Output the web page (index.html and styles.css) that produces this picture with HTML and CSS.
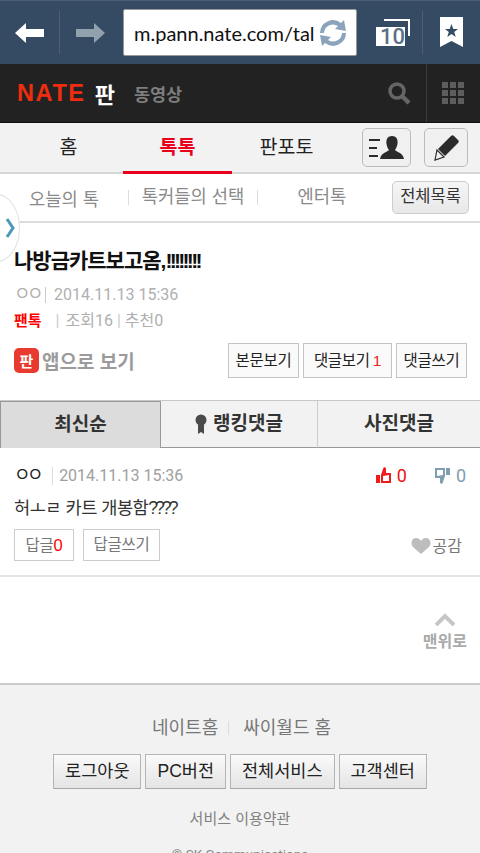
FILE: index.html
```html
<!DOCTYPE html>
<html lang="ko">
<head>
  <meta charset="UTF-8" />
  <meta name="viewport" content="width=device-width, initial-scale=1.0" />
  <title>나방금카트보고옴</title>
  <link rel="stylesheet" href="styles.css">
</head>
<body>
  <div class="browser-bar">
    <div class="nav-btn">
      <svg width="30" height="20" viewBox="0 0 30 20"><path d="M0 10 11 0V6H29V14H11V20Z" fill="#fff"/></svg>
    </div>
    <div class="nav-btn forward">
      <svg width="30" height="20" viewBox="0 0 30 20"><path d="M29 10 18 0V6H0V14H18V20Z" fill="#93a1af"/></svg>
    </div>
    <div class="url-box">
      <span class="url-text">m.pann.nate.com/tal</span>
      <svg class="reload" width="28" height="30" viewBox="0 0 28 30">
        <path d="M1 15A13 13 0 0 1 22 5L25 2 27 13 16 11 19 8A9 9 0 0 0 5 15Z" fill="#8ba4bb"/>
        <path d="M27 15A13 13 0 0 1 6 25L3 28 1 17 12 19 9 22A9 9 0 0 0 23 15Z" fill="#8ba4bb"/>
      </svg>
    </div>
    <div class="tabs-btn">
      <svg width="36" height="28" viewBox="0 0 36 28">
        <path d="M8 0H34V17H32V2H8Z" fill="#fff"/>
        <rect x="0" y="8" width="29" height="19" fill="#fff"/>
      </svg>
      <span class="tabs-count">10</span>
    </div>
    <div class="bookmark-btn">
      <svg width="23" height="31" viewBox="0 0 23 31">
        <path d="M0 0H23V30L11.500 24 0 30Z" fill="#fff"/>
        <path d="M11.500 7 13.300 12H18L14.200 15 15.700 20 11.500 17 7.300 20 8.800 15 5 12H9.700Z" fill="#344b63"/>
      </svg>
    </div>
  </div>

  <header class="site-head">
    <a class="logo">NATE</a>
    <a class="logo-pann">판</a>
    <a class="head-link">동영상</a>
    <div class="head-search">
      <svg width="24" height="24" viewBox="0 0 24 24" fill="none" stroke="#666">
        <circle cx="10" cy="10" r="7" stroke-width="3.500"/>
        <path d="M15 15 22 22" stroke-width="4.500"/>
      </svg>
    </div>
    <div class="head-menu">
      <span></span><span></span><span></span><span></span><span></span><span></span><span></span><span></span><span></span>
    </div>
  </header>

  <nav class="main-tabs">
    <a class="main-tab">홈</a>
    <a class="main-tab active">톡톡</a>
    <a class="main-tab">판포토</a>
    <div class="tab-tools">
      <div class="tool-btn wide">
        <svg width="36" height="26" viewBox="0 0 36 26" fill="#2b2b2b">
          <rect x="0" y="4" width="11" height="2"/><rect x="0" y="12" width="8" height="2"/><rect x="0" y="20" width="9" height="2"/>
          <path d="M23 1C28 1 29 5 28.500 9 28 12 26.500 14 26 15 28 17 34 18 35 24H11C12 18 18 17 20 15 19 14 18 12 17.500 9 17 5 18 1 23 1Z"/>
        </svg>
      </div>
      <div class="tool-btn">
        <svg width="26" height="26" viewBox="0 0 26 26">
          <path d="M18 1C19 0 20 0 21 1L25 5C26 6 26 7 25 8L12 21 5 14Z" fill="#2b2b2b"/>
          <path d="M4 15 11 22 2 25Z" fill="#f2f2f2" stroke="#2b2b2b" stroke-width="1.200"/>
        </svg>
      </div>
    </div>
  </nav>

  <nav class="sub-tabs">
    <a class="sub-tab">오늘의 톡</a>
    <a class="sub-tab sep">톡커들의 선택</a>
    <a class="sub-tab sep">엔터톡</a>
    <a class="all-list">전체목록</a>
  </nav>

  <div class="side-handle">
    <svg width="10" height="22" viewBox="0 0 10 22" fill="none" stroke="#4a9ab8" stroke-width="3"><path d="M2 2 8 11 2 20"/></svg>
  </div>

  <section class="post">
    <h1 class="post-title">나방금카트보고옴,<span class="bangs">!!!!!!!!</span></h1>
    <p class="post-meta"><span class="bar-after"><span class="jamo">ㅇㅇ</span></span> 2014.11.13 15:36</p>
    <p class="post-meta second"><span class="red-cat">팬톡</span><span class="pipe">|</span>조회16 <span class="pipe-small">|</span> 추천0</p>
    <div class="post-actions">
      <div class="app-icon"><span>판</span></div>
      <span class="app-text">앱으로 보기</span>
      <div class="action-btns">
        <a class="box-btn">본문보기</a>
        <a class="box-btn">댓글보기<em>1</em></a>
        <a class="box-btn">댓글쓰기</a>
      </div>
    </div>
  </section>

  <div class="reply-tabs">
    <a class="reply-tab active">최신순</a>
    <a class="reply-tab">
      <svg width="12" height="20" viewBox="0 0 12 20" fill="#4a4a4a"><circle cx="6" cy="6" r="5.500"/><path d="M3 11H9V20L6 18 3 20Z"/></svg>
      랭킹댓글
    </a>
    <a class="reply-tab">사진댓글</a>
  </div>

  <section class="comment">
    <div class="comment-top">
      <span class="comment-author"><span class="jamo">ㅇㅇ</span></span>
      <span class="comment-date">2014.11.13 15:36</span>
      <span class="vote up">
        <svg width="15" height="17" viewBox="0 0 15 17" fill="#ee1c1c"><path d="M0 8H4V16H0ZM5 8 7 2 8 0 10 1V6H15V16H5ZM7 9V14H13V8Z"/></svg>
        0
      </span>
      <span class="vote down">
        <svg width="15" height="17" viewBox="0 0 15 17" fill="#7f9eb0"><path d="M15 8H11V1H15ZM10 9 8 15 7 17 5 16V11H0V1H10ZM8 8V3H2V9Z"/></svg>
        0
      </span>
    </div>
    <p class="comment-body">허ㅗㄹ 카트 개봉함<span class="quest">????</span></p>
    <div class="comment-actions">
      <a class="box-btn light">답글<em>0</em></a>
      <a class="box-btn light">답글쓰기</a>
      <span class="like">
        <svg width="20" height="17" viewBox="0 0 20 17"><path d="M10 17 2 10C-1 6 1 1 5 1 7 1 9 2 10 4 11 2 13 1 15 1 19 1 21 6 18 10Z" fill="#bdbdbd"/></svg>
        공감
      </span>
    </div>
  </section>

  <div class="to-top-row">
    <a class="to-top">
      <svg width="20" height="13" viewBox="0 0 20 13" fill="none" stroke="#c6c6c6" stroke-width="4"><path d="M1 12 10 3 19 12"/></svg>
      맨위로
    </a>
  </div>

  <footer class="site-foot">
    <div class="foot-links"><a>네이트홈</a><span class="foot-sep"></span><a>싸이월드 홈</a></div>
    <div class="foot-btns">
      <a class="foot-btn">로그아웃</a>
      <a class="foot-btn">PC버전</a>
      <a class="foot-btn">전체서비스</a>
      <a class="foot-btn">고객센터</a>
    </div>
    <p class="foot-terms">서비스 이용약관</p>
    <p class="foot-copy">© SK Communications</p>
  </footer>
</body>
</html>
```

FILE: styles.css
```css
html, body {
  margin: 0;
  height: 853px;
  overflow: hidden;
}
body {
  position: relative;
  font-family: "Liberation Sans", "Noto Sans CJK KR", sans-serif;
  background: #fff;
  color: #222;
}
p, h1 {
  margin: 0;
}
em {
  font-style: normal;
  color: #e8261c;
}
.jamo {
  font-size: 18px;
  letter-spacing: -3.500px;
  font-weight: normal;
}

/* browser toolbar */
.browser-bar {
  height: 64px;
  box-sizing: border-box;
  background: #344b63;
  border-top: 1px solid #4b6078;
  display: flex;
  align-items: center;
}
.nav-btn {
  width: 59px;
  height: 43px;
  display: flex;
  align-items: center;
  justify-content: center;
  border-right: 1px solid #4b6078;
}
.nav-btn svg {
  margin-left: 1px;
}
.nav-btn.forward {
  width: 60px;
  padding-right: 3px;
  border-right: none;
}
.url-box {
  position: relative;
  width: 234px;
  height: 47px;
  box-sizing: border-box;
  background: #fff;
  border: 1px solid #999;
  border-radius: 2px;
  display: flex;
  align-items: center;
  padding-left: 10px;
  overflow: hidden;
}
.url-text {
  font-family: "Lato", sans-serif;
  font-size: 20px;
  color: #111;
  white-space: nowrap;
}
.reload {
  position: absolute;
  right: 9px;
  top: 8px;
}
.tabs-btn {
  position: relative;
  width: 36px;
  height: 28px;
  margin-left: 19px;
}
.tabs-count {
  position: absolute;
  left: 4px;
  top: 7px;
  font-family: "Roboto", sans-serif;
  font-size: 22px;
  line-height: 21px;
  font-weight: 500;
  color: #5b7188;
}
.bookmark-btn {
  width: 23px;
  height: 43px;
  margin-left: 10px;
  padding-left: 17px;
  display: flex;
  align-items: center;
  border-left: 1px solid #4b6078;
}

/* nate header */
.site-head {
  height: 59px;
  box-sizing: border-box;
  background: #222;
  border-bottom: 1px solid #111;
  display: flex;
  align-items: center;
  padding-left: 17px;
}
.logo {
  font-family: "Liberation Sans", sans-serif;
  font-weight: bold;
  font-size: 23.500px;
  letter-spacing: 1.600px;
  color: #ee2d10;
}
.logo-pann {
  margin-left: 9px;
  font-size: 22px;
  font-weight: bold;
  color: #fff;
}
.head-link {
  margin-left: 19px;
  font-size: 17.500px;
  font-weight: bold;
  color: #7d7d7d;
}
.head-search {
  margin-left: auto;
  width: 24px;
  height: 24px;
  margin-right: 15px;
}
.head-menu {
  width: 54px;
  height: 58px;
  box-sizing: border-box;
  border-left: 1px solid #3c3c3c;
  padding: 18px 15px 18px 15px;
  display: grid;
  grid-template-columns: repeat(3, 6px);
  grid-auto-rows: 6px;
  gap: 2px;
}
.head-menu span {
  background: #5e5e5e;
}

/* main tabs */
.main-tabs {
  height: 51px;
  box-sizing: border-box;
  background: #f2f2f2;
  border-bottom: 2px solid #d8d8d8;
  display: flex;
  padding-left: 14px;
}
.main-tab {
  width: 109px;
  height: 51px;
  box-sizing: border-box;
  line-height: 48px;
  text-align: center;
  font-size: 19.500px;
  color: #222;
}
.main-tab.active {
  color: #e8001c;
  font-weight: bold;
  border-bottom: 3px solid #e8001c;
}
.tab-tools {
  margin-left: auto;
  display: flex;
  gap: 13px;
  padding: 5px 12px 0 0;
}
.tool-btn {
  width: 44px;
  height: 39px;
  box-sizing: border-box;
  border: 1px solid #bbb;
  border-radius: 5px;
  background: #f0f0f0;
  display: flex;
  align-items: center;
  justify-content: center;
}
.tool-btn.wide {
  width: 49px;
}

/* sub tabs */
.sub-tabs {
  height: 49px;
  box-sizing: border-box;
  border-bottom: 2px solid #ddd;
  display: flex;
  align-items: center;
  font-size: 17.700px;
  color: #8a8a8a;
}
.sub-tab {
  width: 128px;
  text-align: center;
  position: relative;
}
.sub-tab.sep {
  border-left: 1px solid #ddd;
  line-height: 15px;
}
.all-list {
  width: 77px;
  height: 33px;
  margin-left: auto;
  margin-right: 11px;
  box-sizing: border-box;
  border: 1px solid #ccc;
  border-radius: 5px;
  background: linear-gradient(#f5f5f5, #e8e8e8);
  color: #333;
  font-size: 16.500px;
  line-height: 29px;
  text-align: center;
}
.side-handle {
  position: absolute;
  left: -27px;
  top: 194px;
  width: 47px;
  height: 68px;
  box-sizing: border-box;
  border: 1px solid #d9e3e6;
  border-radius: 50%;
  background: #fff;
  display: flex;
  align-items: center;
  justify-content: flex-end;
  padding-right: 4px;
}

/* post */
.post {
  height: 177px;
  box-sizing: border-box;
  padding: 24px 13px 0 14px;
}
.post-title {
  font-size: 21px;
  line-height: 28px;
  letter-spacing: -1px;
  color: #111;
}
.bangs {
  letter-spacing: -2.700px;
}
.post-meta {
  margin-top: 7px;
  font-size: 16px;
  line-height: 24px;
  color: #b0b0b0;
  font-family: "Roboto", "Noto Sans CJK KR", sans-serif;
  height: 24px;
}
.post-meta.second {
  margin-top: 2px;
  height: 25px;
  line-height: 25px;
}
.bar-after {
  padding-right: 5px;
  border-right: 1px solid #ccc;
  margin-right: 4px;
  font-size: 14px;
}
.red-cat {
  color: #f00;
  font-size: 15px;
  font-weight: bold;
}
.pipe {
  margin: 0 6px 0 14px;
  color: #ccc;
}
.pipe-small {
  color: #ccc;
}
.post-actions {
  margin-top: 10px;
  display: flex;
  align-items: center;
}
.app-icon {
  width: 25px;
  height: 25px;
  border-radius: 5px;
  background: #e83a2e;
  display: flex;
  align-items: center;
  justify-content: center;
  color: #fff;
  font-size: 15px;
  font-weight: bold;
}
.app-text {
  margin-left: 3px;
  font-size: 19px;
  font-weight: bold;
  color: #9b9b9b;
}
.action-btns {
  margin-left: auto;
  display: flex;
  gap: 4px;
}
.box-btn {
  height: 35px;
  box-sizing: border-box;
  padding: 0 7px;
  border: 1px solid #c4c4c4;
  background: #fafafa;
  font-size: 15.500px;
  line-height: 33px;
  letter-spacing: -0.300px;
  color: #222;
  white-space: nowrap;
}
.box-btn em {
  margin-left: 3px;
}
.action-btns .box-btn {
  width: 71px;
  text-align: center;
  padding: 0;
}
.action-btns .box-btn:nth-child(2) {
  width: 89px;
}
.box-btn.light {
  width: 60px;
  height: 32px;
  line-height: 30px;
  background: #fff;
  color: #777;
  font-size: 15.500px;
  padding: 0;
  text-align: center;
  border-color: #ccc;
}
.box-btn.light + .box-btn.light {
  width: 77px;
}
.box-btn.light em {
  margin-left: 0;
  font-size: 16.500px;
  color: #f00;
}

/* reply tabs */
.reply-tabs {
  height: 48px;
  box-sizing: border-box;
  display: grid;
  grid-template-columns: 161px 157px 1fr;
  border-top: 1px solid #c8c8c8;
}
.reply-tab {
  background: #f2f2f2;
  border-right: 1px solid #ccc;
  border-bottom: 1px solid #999;
  font-size: 19px;
  font-weight: bold;
  color: #333;
  line-height: 44px;
  text-align: center;
  display: flex;
  align-items: center;
  justify-content: center;
  gap: 6px;
}
.reply-tab.active {
  background: #dcdcdc;
  border-left: 1px solid #999;
  border-top: 1px solid #999;
  border-right: 1px solid #999;
  border-bottom: none;
}
.reply-tab:last-child {
  border-right: none;
}

/* comment */
.comment {
  height: 129px;
  box-sizing: border-box;
  padding: 15px 14px 0 14px;
  border-bottom: 2px solid #e4e4e4;
}
.comment-top {
  display: flex;
  align-items: center;
  height: 25px;
}
.comment-author {
  font-size: 14px;
  color: #222;
  padding-right: 12px;
  border-right: 1px solid #ddd;
  line-height: 17px;
}
.comment-date {
  margin-left: 6px;
  font-family: "Roboto", sans-serif;
  font-size: 16px;
  color: #a0a0a0;
}
.vote {
  display: flex;
  align-items: center;
  gap: 6px;
  font-family: "Roboto", sans-serif;
  font-size: 18px;
}
.vote.up {
  margin-left: auto;
  color: #f01010;
}
.vote.down {
  margin-left: 28px;
  color: #7f9eb0;
}
.comment-body {
  margin-top: 8px;
  font-size: 17.600px;
  line-height: 24px;
  letter-spacing: -0.500px;
  color: #333;
}
.quest {
  letter-spacing: -3px;
}
.comment-actions {
  margin-top: 9px;
  display: flex;
  align-items: center;
  gap: 9px;
}
.like {
  margin-left: auto;
  margin-right: 4px;
  display: flex;
  align-items: center;
  gap: 2px;
  font-size: 16px;
  color: #777;
}

/* to top */
.to-top-row {
  height: 106px;
  box-sizing: border-box;
  display: flex;
  justify-content: flex-end;
  padding: 36px 13px 0 0;
}
.to-top {
  display: flex;
  flex-direction: column;
  align-items: center;
  gap: 2px;
  font-size: 16px;
  font-weight: bold;
  color: #aaa;
}

/* footer */
.site-foot {
  height: 170px;
  box-sizing: border-box;
  background: #f2f2f2;
  border-top: 2px solid #ccc;
  padding-top: 31px;
  text-align: center;
}
.foot-links {
  font-size: 18px;
  line-height: 24px;
  color: #777;
  display: flex;
  justify-content: center;
  align-items: center;
  margin-left: 3px;
}
.foot-sep {
  width: 1px;
  height: 14px;
  background: #ddd;
  margin: 0 14px 0 10px;
}
.foot-btns {
  margin-top: 14px;
  display: flex;
  justify-content: center;
  gap: 4px;
}
.foot-btn {
  height: 35px;
  box-sizing: border-box;
  padding: 0 11px;
  border: 1px solid #b5b5b5;
  border-bottom-color: #a8a8a8;
  background: linear-gradient(#fafafa, #e4e4e4);
  font-size: 17.500px;
  line-height: 33px;
  color: #222;
  white-space: nowrap;
}
.foot-terms {
  margin-top: 18px;
  font-size: 15px;
  line-height: 24px;
  color: #808080;
}
.foot-copy {
  margin-top: 15px;
  font-family: "Roboto", sans-serif;
  font-size: 13.500px;
  color: #888;
}
```
